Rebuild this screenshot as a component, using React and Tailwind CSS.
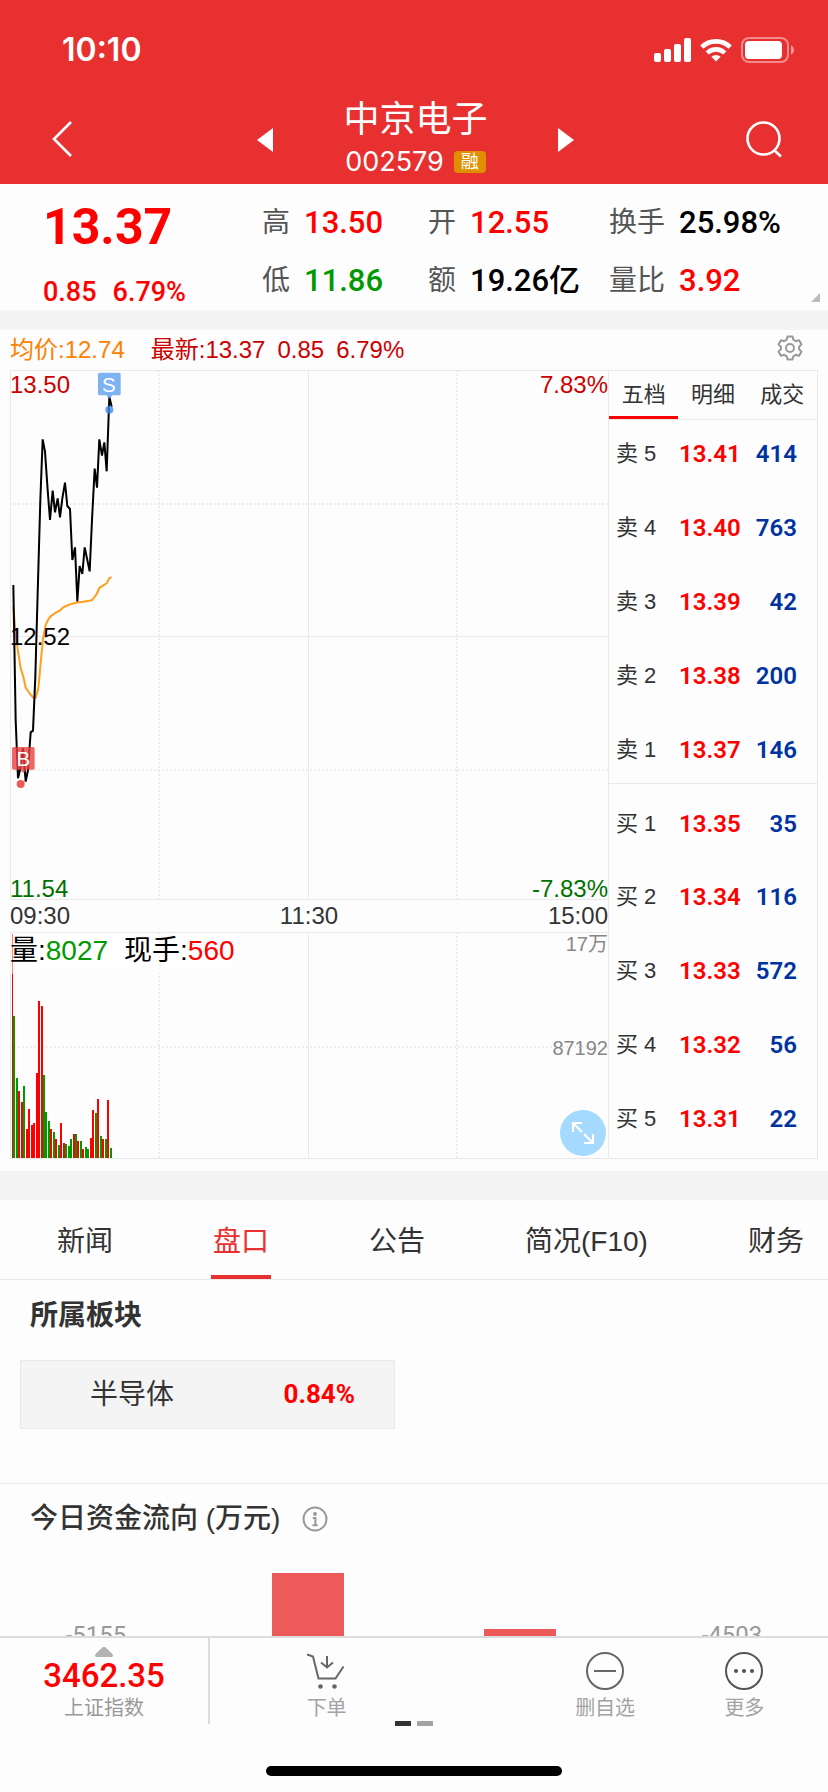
import React from "react";

const UP = "#ff0000";
const DOWN = "#009900";

const quoteStats = [
  { label: "高", value: "13.50", tone: "text-[#ff0000]" },
  { label: "开", value: "12.55", tone: "text-[#ff0000]" },
  { label: "换手", value: "25.98%", tone: "text-black" },
  { label: "低", value: "11.86", tone: "text-[#009900]" },
  { label: "额", value: "19.26亿", tone: "text-black" },
  { label: "量比", value: "3.92", tone: "text-[#ff0000]" },
];

const asks = [
  ["卖 5", "13.41", "414"],
  ["卖 4", "13.40", "763"],
  ["卖 3", "13.39", "42"],
  ["卖 2", "13.38", "200"],
  ["卖 1", "13.37", "146"],
];

const bids = [
  ["买 1", "13.35", "35"],
  ["买 2", "13.34", "116"],
  ["买 3", "13.33", "572"],
  ["买 4", "13.32", "56"],
  ["买 5", "13.31", "22"],
];

const priceLine =
  "40,675 47,1080 54,1255 60,1230 69,1165 77,1265 84,1230 92,1117 99,1112 106,950 113,700 121,420 128,238 135,275 143,390 150,480 158,392 165,457 173,415 180,472 187,415 195,368 202,438 210,447 217,600 225,562 232,724 239,618 247,642 254,562 262,600 269,634 276,480 284,326 291,383 298,238 306,287 313,247 320,334 328,110 335,140";

const averageLine =
  "40,740 48,830 55,880 62,925 70,950 77,983 90,1002 100,1013 107,1013 115,985 121,920 129,835 137,795 145,778 152,769 165,759 180,751 190,742 205,735 228,728 250,725 275,721 282,713 290,702 298,684 310,676 320,670 328,654 335,652";

// x, top and direction (1 = up, 0 = down) of each minute's volume
const volumes = [
  [39, 468, 0], [48, 654, 0], [54, 693, 1], [63, 726, 1], [69, 678, 0],
  [78, 807, 1], [84, 747, 1], [93, 795, 1], [99, 789, 1], [108, 639, 1],
  [114, 423, 1], [123, 438, 1], [129, 645, 0], [135, 756, 0], [144, 783, 0],
  [150, 807, 1], [159, 816, 0], [165, 837, 1], [174, 855, 0], [180, 789, 1],
  [189, 849, 1], [195, 852, 0], [204, 858, 0], [210, 837, 0], [219, 822, 1],
  [225, 822, 0], [231, 843, 1], [240, 843, 0], [246, 867, 1], [255, 861, 0],
  [261, 867, 0], [270, 834, 1], [276, 750, 1], [285, 759, 0], [291, 717, 1],
  [300, 828, 0], [306, 837, 1], [315, 837, 0], [321, 720, 1], [330, 864, 0],
];

const infoTabs = ["新闻", "盘口", "公告", "简况(F10)", "财务"];

function StatusBar() {
  return (
    <div className="flex items-center justify-between pt-8 pr-[34px] pl-[62px]">
      <span className="font-['Inter','Liberation_Sans',sans-serif] text-[32px] leading-9 font-semibold">10:10</span>
      <div className="flex items-center gap-[9px]">
        <svg width="37" height="24" viewBox="0 0 37 24" fill="#fff" aria-hidden="true">
          <rect x="0" y="15" width="7" height="9" rx="2" />
          <rect x="10" y="11" width="7" height="13" rx="2" />
          <rect x="20" y="6" width="7" height="18" rx="2" />
          <rect x="30" y="0" width="7" height="24" rx="2" />
        </svg>
        <svg width="32" height="24" viewBox="0 0 32 24" fill="none" stroke="#fff" strokeWidth="4.6" aria-hidden="true">
          <path d="M1.8 9.2a20.2 20.2 0 0 1 28.4 0" />
          <path d="M7.2 15a12.4 12.4 0 0 1 17.6 0" />
          <path d="M16 23.5l-4.6-4.7a6.6 6.6 0 0 1 9.2 0z" fill="#fff" stroke="none" />
        </svg>
        <svg width="53" height="26" viewBox="0 0 53 26" aria-hidden="true">
          <rect x="1" y="1" width="46" height="24" rx="7" fill="none" stroke="#fff" strokeOpacity=".45" strokeWidth="2" />
          <rect x="4" y="4" width="37" height="18" rx="4" fill="#fff" />
          <path d="M50 8.500c4 1.500 4 7.500 0 9z" fill="#fff" fillOpacity=".5" />
        </svg>
      </div>
    </div>
  );
}

function Header() {
  return (
    <header className="shrink-0 bg-[#e93030] pb-1 text-white">
      <StatusBar />
      <div className="flex items-start justify-between pt-7 pr-[43px] pl-[48px]">
        <button type="button" aria-label="返回" className="pt-6">
          <svg width="38" height="38" viewBox="0 0 38 38" fill="none" stroke="#fff" strokeWidth="2.600">
            <path d="M23 2L6 19l17 17" />
          </svg>
        </button>
        <div className="flex gap-[70px]">
          <button type="button" aria-label="上一只" className="self-start pt-[31px]">
            <svg width="16" height="26" viewBox="0 0 16 26" fill="#fff">
              <path d="M16 1v24L0 13z" />
            </svg>
          </button>
          <div className="flex flex-col items-center">
            <h1 className="text-[36px] leading-[48px]">中京电子</h1>
            <div className="flex items-center gap-[10px]">
              <span className="font-['Inter','Liberation_Sans',sans-serif] text-[27px] leading-9">002579</span>
              <span className="rounded-sm bg-[#e08f00] px-[7px] text-[18px] leading-[22px]">融</span>
            </div>
          </div>
          <button type="button" aria-label="下一只" className="self-start pt-[31px]">
            <svg width="16" height="26" viewBox="0 0 16 26" fill="#fff">
              <path d="M0 1v24l16-12z" />
            </svg>
          </button>
        </div>
        <button type="button" aria-label="搜索" className="pt-6">
          <svg width="40" height="40" viewBox="0 0 40 40" fill="none" stroke="#fff" strokeWidth="2.600">
            <circle cx="18.500" cy="18.500" r="16" />
            <path d="M29.500 30.500l6.500 6" />
          </svg>
        </button>
      </div>
    </header>
  );
}

function Quote() {
  return (
    <section className="relative flex h-[126px] pl-[43px]">
      <div className="flex w-[219px] flex-col font-['Roboto',sans-serif] text-[#ff0000]">
        <span className="pt-3 text-[50px] leading-[62px] font-bold">13.37</span>
        <span className="flex gap-4 pt-[18px] text-[27px] leading-8 font-medium">
          <span>0.85</span>
          <span>6.79%</span>
        </span>
      </div>
      <dl className="grid flex-1 grid-cols-[166px_181px_1fr] content-start gap-y-[14px] pt-[17px]">
        {quoteStats.map((s) => (
          <div key={s.label} className="flex items-center gap-[14px]">
            <dt className="text-[28px] leading-[44px] text-[#555]">{s.label}</dt>
            <dd className={`font-['Roboto','Noto_Sans_CJK_SC',sans-serif] text-[31px] leading-[44px] font-medium whitespace-nowrap ${s.tone}`}>{s.value}</dd>
          </div>
        ))}
      </dl>
      <svg className="absolute right-2 bottom-2" width="9" height="9" viewBox="0 0 9 9" fill="#bbb" aria-hidden="true">
        <path d="M9 0v9H0z" />
      </svg>
    </section>
  );
}

function ChartHeading() {
  return (
    <div className="flex h-10 items-center justify-between pr-[25px] pl-[10px] text-[24px] leading-8">
      <div className="flex gap-[26px]">
        <span className="text-[#ff8000]">均价:12.74</span>
        <span className="flex gap-3 text-[#cc0000]">
          <span>最新:13.37</span>
          <span>0.85</span>
          <span>6.79%</span>
        </span>
      </div>
      <button type="button" aria-label="设置" className="pb-1">
        <svg width="26" height="26" viewBox="0 0 26 26" fill="none" stroke="#999" strokeWidth="2" strokeLinejoin="round">
          <path d="M10.500 1.500h5l.8 3.200 2.500 1.500 3.300-1 2.400 4.200-2.400 2.300v2.600l2.400 2.300-2.400 4.200-3.300-1-2.500 1.500-.8 3.200h-5l-.8-3.200-2.500-1.500-3.300 1-2.400-4.200 2.400-2.300v-2.600L1.500 9.400l2.400-4.200 3.300 1 2.500-1.500z" />
          <circle cx="13" cy="13" r="4" />
        </svg>
      </button>
    </div>
  );
}

function PriceChart() {
  return (
    <div className="relative text-[24px] leading-[28px]">
      <svg className="block w-full" viewBox="30 30 1794 1590" role="img" aria-label="分时走势">
        <g fill="none" stroke="#e9e9e9" strokeWidth="3">
          <path d="M31.500 30V1620M30 31.500H1824M30 829.500H1824M30 1618.500H1824M925.500 30V1620" />
          <path d="M477 30V1620M1371 30V1620M30 432H1824M30 1230H1824" strokeWidth="5" strokeDasharray="6 6" />
        </g>
        <polyline points={averageLine} fill="none" stroke="#ff9f1c" strokeWidth="6" />
        <polyline points={priceLine} fill="none" stroke="#000" strokeWidth="6" />
        <g fill="#5f9ff0" fillOpacity=".8">
          <path d="M299 38h58a5 5 0 0 1 5 5v58a5 5 0 0 1-5 5h-20l-9 10-9-10h-20a5 5 0 0 1-5-5V43a5 5 0 0 1 5-5z" />
          <circle cx="328" cy="149" r="12" fill="#3f88e8" />
        </g>
        <g fill="#ea3c3c" fillOpacity=".78">
          <path d="M41 1161h58a5 5 0 0 1 5 5v58a5 5 0 0 1-5 5H79l-9 10-9-10H41a5 5 0 0 1-5-5v-58a5 5 0 0 1 5-5z" />
          <circle cx="62" cy="1272" r="12" fillOpacity=".85" />
        </g>
        <g fill="#fff" fontSize="62" textAnchor="middle">
          <text x="327" y="95">S</text>
          <text x="70" y="1217">B</text>
        </g>
      </svg>
      <span className="absolute top-px left-0 text-[#cc0000]">13.50</span>
      <span className="absolute inset-y-0 left-0 flex items-center pt-1 text-black">12.52</span>
      <span className="absolute bottom-[-3px] left-0 text-[#007000]">11.54</span>
      <span className="absolute top-px right-0 text-[#cc0000]">7.83%</span>
      <span className="absolute right-0 bottom-[-3px] text-[#007000]">-7.83%</span>
    </div>
  );
}

function VolumeChart() {
  return (
    <div className="relative">
      <svg className="block w-full" viewBox="30 216 1794 681" role="img" aria-label="成交量">
        <g fill="none" stroke="#e9e9e9" strokeWidth="3">
          <path d="M31.500 216V897M30 217.500H1824M30 895.500H1824M925.500 216V897" />
          <path d="M477 216V897M1371 216V897M30 561H1824" strokeWidth="5" strokeDasharray="6 6" />
        </g>
        <rect x="36" y="222" width="3" height="672" fill={UP} />
        {volumes.map(([x, top, up]) => (
          <rect key={x} x={x} y={top} width="6" height={894 - top} fill={up ? UP : DOWN} />
        ))}
      </svg>
      <div className="absolute top-[2px] left-0 flex h-10 gap-4 bg-white/50 pr-1 text-[28px] leading-[34px] text-black">
        <span>
          量:<span className="text-[#009900]">8027</span>
        </span>
        <span>
          现手:<span className="text-[#ff0000]">560</span>
        </span>
      </div>
      <span className="absolute top-0 right-0 text-[20px] leading-6 text-[#888]">17万</span>
      <span className="absolute inset-y-0 right-0 flex items-center pt-1 text-[20px] leading-6 text-[#888]">87192</span>
      <button type="button" aria-label="全屏" className="absolute right-[2px] bottom-[3px] flex size-[46px] items-center justify-center rounded-full bg-[#a5d9ff]">
        <svg width="24" height="24" viewBox="0 0 24 24" fill="none" stroke="#fff" strokeWidth="2.200">
          <path d="M2 11V2h9M2 2l9 9M22 13v9h-9M22 22l-9-9" />
        </svg>
      </button>
    </div>
  );
}

function OrderRow({ row, cell }) {
  const [label, price, volume] = row;
  return (
    <tr>
      <th scope="row" className={`${cell} w-[70px] pl-[7px] text-left text-[22px] font-normal text-[#333]`}>{label}</th>
      <td className={`${cell} font-['Roboto',sans-serif] text-[24px] font-semibold text-[#ff0000]`}>{price}</td>
      <td className={`${cell} pr-5 text-right font-['Roboto',sans-serif] text-[24px] font-semibold text-[#0033a0]`}>{volume}</td>
    </tr>
  );
}

function OrderBook() {
  const askCell = "h-[74px] pt-[21px] align-top leading-[26px]";
  const lastAskCell = "h-[67px] pt-[21px] align-top leading-[26px]";
  const bidCell = "h-[74px] pt-[27px] align-top leading-[26px]";
  return (
    <aside className="w-[210px] shrink-0 border border-[#e9e9e9]">
      <div className="grid grid-cols-3 border-b border-[#e9e9e9] text-[22px] leading-[48px] text-[#333]">
        <button type="button" className="relative">
          五档
          <span className="absolute inset-x-0 bottom-0 h-[3px] bg-[#ff0000]" />
        </button>
        <button type="button">明细</button>
        <button type="button">成交</button>
      </div>
      <table className="w-full border-collapse">
        <tbody className="border-b border-[#e9e9e9]">
          {asks.map((r, i) => (
            <OrderRow key={r[0]} row={r} cell={i === asks.length - 1 ? lastAskCell : askCell} />
          ))}
        </tbody>
        <tbody>
          {bids.map((r) => (
            <OrderRow key={r[0]} row={r} cell={bidCell} />
          ))}
        </tbody>
      </table>
    </aside>
  );
}

function Charts() {
  return (
    <section className="flex pr-[10px] pb-3 pl-[10px]">
      <div className="min-w-0 flex-1">
        <PriceChart />
        <div className="grid grid-cols-3 text-[24px] leading-8 text-[#333]">
          <span>09:30</span>
          <span className="text-center">11:30</span>
          <span className="text-right">15:00</span>
        </div>
        <VolumeChart />
      </div>
      <OrderBook />
    </section>
  );
}

function InfoTabs() {
  return (
    <nav className="flex h-20 gap-[100px] overflow-hidden border-b border-[#e9e9e9] pl-[57px] text-[28px] text-[#333]">
      {infoTabs.map((t) => (
        <button
          key={t}
          type="button"
          className={`relative shrink-0 pt-1 whitespace-nowrap ${t === "盘口" ? "text-[#e93030]" : ""}`}
        >
          {t}
          {t === "盘口" && <span className="absolute -inset-x-[2px] bottom-0 h-1 bg-[#e93030]" />}
        </button>
      ))}
    </nav>
  );
}

function MoneyFlow() {
  return (
    <section className="border-t border-[#e9e9e9]">
      <div className="flex items-center gap-[22px] pt-[15px] pl-[30px]">
        <h2 className="text-[28px] leading-10 font-medium text-[#333]">今日资金流向 (万元)</h2>
        <button type="button" aria-label="说明">
          <svg width="26" height="26" viewBox="0 0 26 26" fill="none" stroke="#999" strokeWidth="2">
            <circle cx="13" cy="13" r="11.500" />
            <circle cx="13" cy="8" r="1.900" fill="#999" stroke="none" />
            <path d="M10.800 12h2.600v7M10.500 19.200h5.200" />
          </svg>
        </button>
      </div>
      <div className="flex items-start justify-between px-[60px] pt-[34px] font-['Roboto',sans-serif] text-[24px] leading-7 text-[#999]">
        <span className="mt-[48px] w-[72px] text-center">-5155</span>
        <span className="h-[120px] w-[72px] bg-[#ed5a5a]" />
        <span className="mt-[56px] h-[64px] w-[72px] bg-[#ed5a5a]" />
        <span className="mt-[48px] w-[72px] text-center">-4503</span>
      </div>
    </section>
  );
}

function BottomBar() {
  const item = "flex flex-col items-center gap-1 text-[20px] leading-7 text-[#a3a3a3]";
  return (
    <footer className="shrink-0 border-t-2 border-[#dcdcdc] bg-[#fdfdfd]">
      <div className="relative flex">
        <button type="button" className="flex h-[86px] w-[210px] flex-col items-center border-r-2 border-[#dcdcdc] pt-[9px]">
          <svg width="18" height="10" viewBox="0 0 18 10" fill="#b3b3b3" aria-hidden="true">
            <path d="M9 0c1 0 1.800.5 2.500 1.200L17 6.500c1.800 1.700 1 3.500-1 3.500H2c-2 0-2.800-1.800-1-3.500l5.500-5.300C7.200.5 8 0 9 0z" />
          </svg>
          <span className="font-['Roboto',sans-serif] text-[33px] leading-[38px] font-medium text-[#ff0000]">3462.35</span>
          <span className="text-[20px] leading-[26px] text-[#999]">上证指数</span>
        </button>
        <div className="grid flex-1 grid-cols-4 items-start pt-[14px] pr-[14px] pl-[47px]">
          <button type="button" className={item}>
            <svg width="40" height="38" viewBox="0 0 40 38" fill="none" stroke="#666" strokeWidth="2">
              <path d="M0 2.500l6 2 5.500 22h17L36.500 14.500" />
              <path d="M20 4v12M14 10.500l6 5 6-5" />
              <circle cx="13.500" cy="34.500" r="2.300" fill="#666" stroke="none" />
              <circle cx="27.500" cy="34.500" r="2.300" fill="#666" stroke="none" />
            </svg>
            下单
          </button>
          <button type="button" className={`${item} col-start-3`}>
            <svg width="38" height="38" viewBox="0 0 38 38" fill="none" stroke="#666" strokeWidth="2">
              <circle cx="19" cy="19" r="18" />
              <path d="M8 19h22" />
            </svg>
            删自选
          </button>
          <button type="button" className={item}>
            <svg width="38" height="38" viewBox="0 0 38 38" fill="none" stroke="#555" strokeWidth="2">
              <circle cx="19" cy="19" r="18" />
              <g fill="#555" stroke="none">
                <circle cx="11" cy="19" r="2.100" />
                <circle cx="19" cy="19" r="2.100" />
                <circle cx="27" cy="19" r="2.100" />
              </g>
            </svg>
            更多
          </button>
        </div>
        <div className="absolute inset-x-0 bottom-[-2px] flex justify-center gap-[6px]">
          <span className="h-[5px] w-4 bg-[#333]" />
          <span className="h-[5px] w-4 bg-[#a3a3a3]" />
        </div>
      </div>
      <div className="flex justify-center pt-[42px] pb-4">
        <span className="h-[10px] w-[296px] rounded-full bg-black" />
      </div>
    </footer>
  );
}

export default function App() {
  return (
    <div className="flex h-dvh flex-col bg-[#fdfdfd] font-['Liberation_Sans','Noto_Sans_CJK_SC',sans-serif]">
      <Header />
      <main className="min-h-0 flex-1 overflow-y-auto [scrollbar-width:none]">
        <Quote />
        <div className="h-5 bg-[#f4f4f4]" />
        <ChartHeading />
        <Charts />
        <div className="h-[29px] bg-[#f4f4f4]" />
        <InfoTabs />
        <section className="pb-[54px]">
          <h2 className="pt-4 pl-[30px] text-[28px] leading-10 font-bold text-[#333]">所属板块</h2>
          <a href="#sector" className="mt-6 ml-5 flex h-[69px] w-[375px] items-center justify-between border border-[#e9e9e9] bg-[#f4f4f4] pr-[39px] pl-[69px]">
            <span className="text-[28px] text-[#333]">半导体</span>
            <span className="font-['Roboto',sans-serif] text-[26px] font-bold text-[#ff0000]">0.84%</span>
          </a>
        </section>
        <MoneyFlow />
      </main>
      <BottomBar />
    </div>
  );
}
